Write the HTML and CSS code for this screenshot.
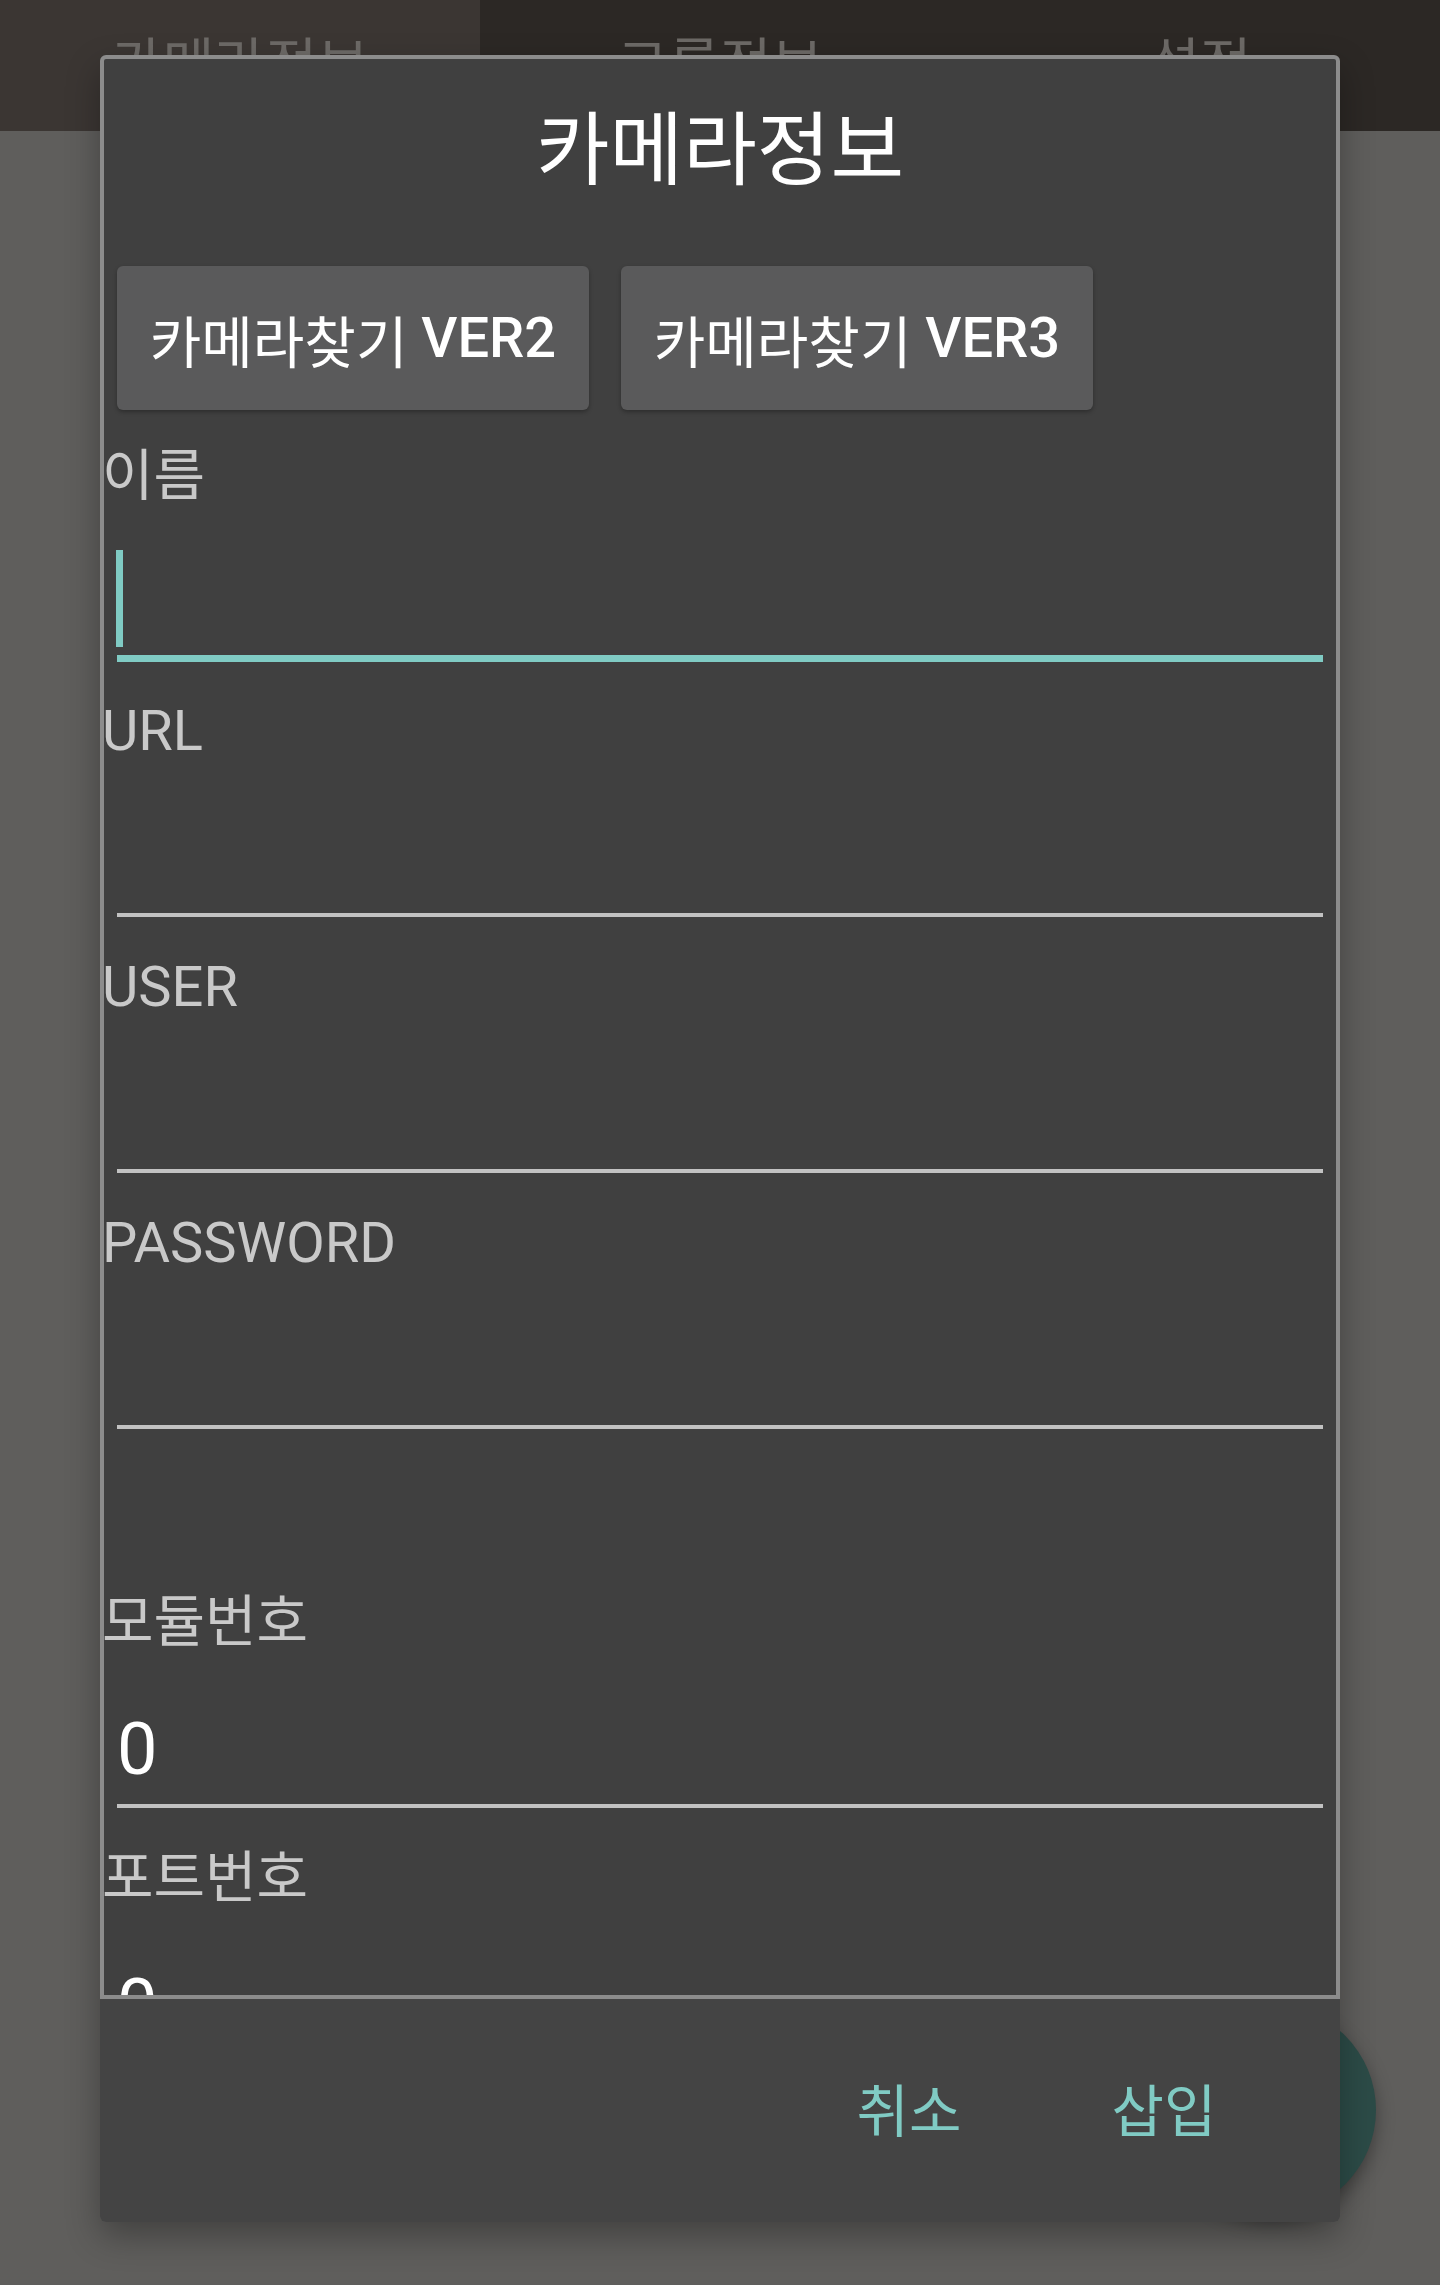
FILE: index.html
```html
<!DOCTYPE html>
<html lang="ko">
<head>
<meta charset="utf-8">
<title>카메라정보</title>
<link rel="stylesheet" href="styles.css">
</head>
<body>
<div class="app">
  <div class="tabs">
    <div class="tab tab-active">카메라정보</div>
    <div class="tab">그룹정보</div>
    <div class="tab">설정</div>
  </div>
  <div class="screen"></div>
</div>
<div class="fab"></div>
<div class="dialog">
  <div class="content">
    <div class="title">카메라정보</div>
    <div class="btn-row">
      <div class="btn">카메라찾기 <span class="btn-latin">VER2</span></div>
      <div class="btn">카메라찾기 <span class="btn-latin">VER3</span></div>
    </div>
    <div class="field field-focused">
      <div class="label">이름</div>
      <div class="input"><span class="cursor"></span></div>
    </div>
    <div class="field field-first">
      <div class="label">URL</div>
      <div class="input"></div>
    </div>
    <div class="field">
      <div class="label">USER</div>
      <div class="input"></div>
    </div>
    <div class="field">
      <div class="label">PASSWORD</div>
      <div class="input"></div>
    </div>
    <div class="field field-after-gap">
      <div class="label">모듈번호</div>
      <div class="input"><span class="value">0</span></div>
    </div>
    <div class="field">
      <div class="label">포트번호</div>
      <div class="input"><span class="value">0</span></div>
    </div>
  </div>
  <div class="actions">
    <div class="action">취소</div>
    <div class="action">삽입</div>
  </div>
</div>
</body>
</html>
```

FILE: styles.css
```css
html, body {
  margin: 0;
  padding: 0;
}
body {
  width: 1440px;
  height: 2285px;
  overflow: hidden;
  position: relative;
  background: #5f5e5c;
  font-family: Roboto, "Noto Sans CJK KR", sans-serif;
}
.app {
  display: flex;
  flex-direction: column;
  height: 2285px;
}
.tabs {
  height: 131px;
  display: flex;
  background: #2c2825;
}
.tab {
  flex: 1;
  display: flex;
  align-items: center;
  justify-content: center;
  font-size: 56px;
  line-height: 1;
  color: #6d6a67;
  padding-bottom: 2px;
}
.tab-active {
  background: #3b3633;
}
.screen {
  flex: 1;
  background: #5f5e5c;
}
.fab {
  position: absolute;
  left: 1166px;
  top: 2005px;
  width: 210px;
  height: 210px;
  border-radius: 50%;
  background: #2c4b47;
  box-shadow: 0 8px 18px rgba(0, 0, 0, 0.35);
}
.dialog {
  position: absolute;
  left: 100px;
  top: 55px;
  width: 1240px;
  height: 2167px;
  display: flex;
  flex-direction: column;
  box-shadow: 0 14px 34px rgba(0, 0, 0, 0.3);
  border-radius: 6px;
}
.content {
  height: 1944px;
  flex: none;
  box-sizing: border-box;
  border: 4px solid #8c8c8c;
  border-radius: 6px 6px 0 0;
  background: #404040;
  overflow: hidden;
  display: flex;
  flex-direction: column;
}
.title {
  margin-top: 54px;
  font-size: 80px;
  line-height: 76px;
  text-align: center;
  color: #ffffff;
}
.btn-row {
  margin-top: 77px;
  padding-left: 13px;
  display: flex;
  gap: 32px;
}
.btn {
  width: 472px;
  height: 144px;
  border-radius: 6px;
  background: #5a5a5b;
  box-shadow: 0 2px 4px rgba(0, 0, 0, 0.3);
  color: #ffffff;
  font-size: 56px;
  display: flex;
  align-items: center;
  justify-content: center;
  white-space: pre;
}
.btn-latin {
  font-weight: 500;
}
.field {
  margin-top: 41px;
  display: flex;
  flex-direction: column;
}
.field-focused {
  margin-top: 37px;
}
.field-first {
  margin-top: 40px;
}
.field-after-gap {
  margin-top: 164px;
}
.label {
  height: 58px;
  margin-left: -2px;
  font-size: 56px;
  line-height: 58px;
  color: #c9c9c9;
  white-space: nowrap;
}
.input {
  margin: 0 13px;
  height: 153px;
  border-bottom: 4px solid #c2c2c2;
  display: flex;
  align-items: flex-end;
}
.field-focused .input {
  height: 150px;
  border-bottom: 7px solid #80cbc4;
}
.cursor {
  display: block;
  width: 7px;
  height: 97px;
  margin-bottom: 8px;
  margin-left: -1px;
  background: #80cbc4;
}
.value {
  font-size: 72px;
  line-height: 72px;
  padding-bottom: 18px;
  color: #ffffff;
}
.actions {
  flex: 1;
  background: #444444;
  border-radius: 0 0 6px 6px;
  display: flex;
  justify-content: flex-end;
  align-items: center;
  gap: 35px;
  padding-right: 66px;
  padding-top: 4px;
}
.action {
  width: 220px;
  text-align: center;
  font-size: 57px;
  line-height: 57px;
  color: #80cbc4;
}
```
